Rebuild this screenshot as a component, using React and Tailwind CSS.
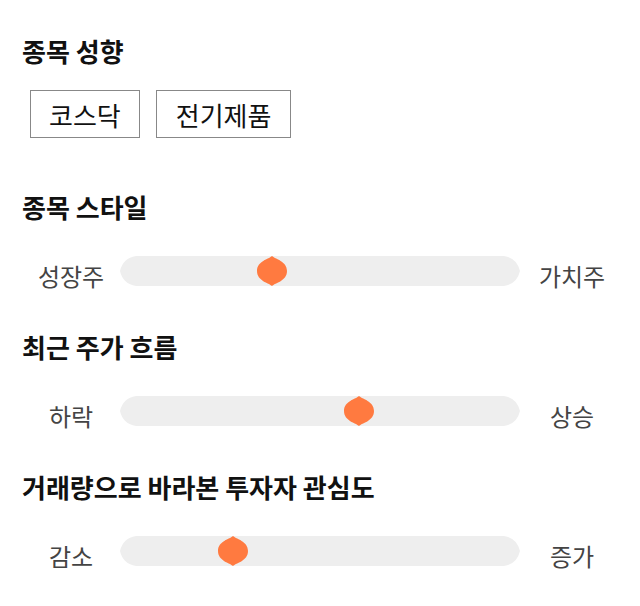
import React from "react";

const font = { fontFamily: '"Noto Sans CJK KR", "Noto Sans", sans-serif' };

function Heading({ children, className = "" }) {
  return (
    <h2 className={`text-[26px] leading-[36px] font-bold text-[#111] ${className}`}>
      {children}
    </h2>
  );
}

function Slider({ left, right, thumbLeft }) {
  return (
    <div className="flex items-start mt-[31px]">
      <div className="w-[98px] text-center text-[24px] leading-[32px] mt-[4px] text-[#444]">{left}</div>
      <div className="relative w-[400px] h-[30px] bg-[#eeeeee] [clip-path:path('M16,0H384Q397,2,400,15Q397,28,384,30H16Q3,28,0,15Q3,2,16,0Z')]">
        <div
          className="absolute top-0 w-[30px] h-[30px] bg-[#ff7a40] [clip-path:path('M15,0C18,3,30,5,30,15C30,25,18,27,15,30C12,27,0,25,0,15C0,5,12,3,15,0Z')]"
          style={{ left: thumbLeft }}
        />
      </div>
      <div className="w-[104px] text-center text-[24px] leading-[32px] mt-[4px] text-[#444]">{right}</div>
    </div>
  );
}

export default function App() {
  return (
    <div className="w-[640px] h-[606px] bg-white pl-[22px] pt-[33px]" style={font}>
      <Heading>종목 성향</Heading>
      <div className="flex mt-[13px]">
        <div className="m-2 h-[48px] px-[18px] flex items-center border border-[#888] text-[26px] text-[#111]">코스닥</div>
        <div className="m-2 h-[48px] px-[19px] flex items-center border border-[#888] text-[26px] text-[#111]">전기제품</div>
      </div>
      <Heading className="mt-[43px]">종목 스타일</Heading>
      <Slider left="성장주" right="가치주" thumbLeft={137} />
      <Heading className="mt-[37px]">최근 주가 흐름</Heading>
      <Slider left="하락" right="상승" thumbLeft={224} />
      <Heading className="mt-[37px]">거래량으로 바라본 투자자 관심도</Heading>
      <Slider left="감소" right="증가" thumbLeft={98} />
    </div>
  );
}
